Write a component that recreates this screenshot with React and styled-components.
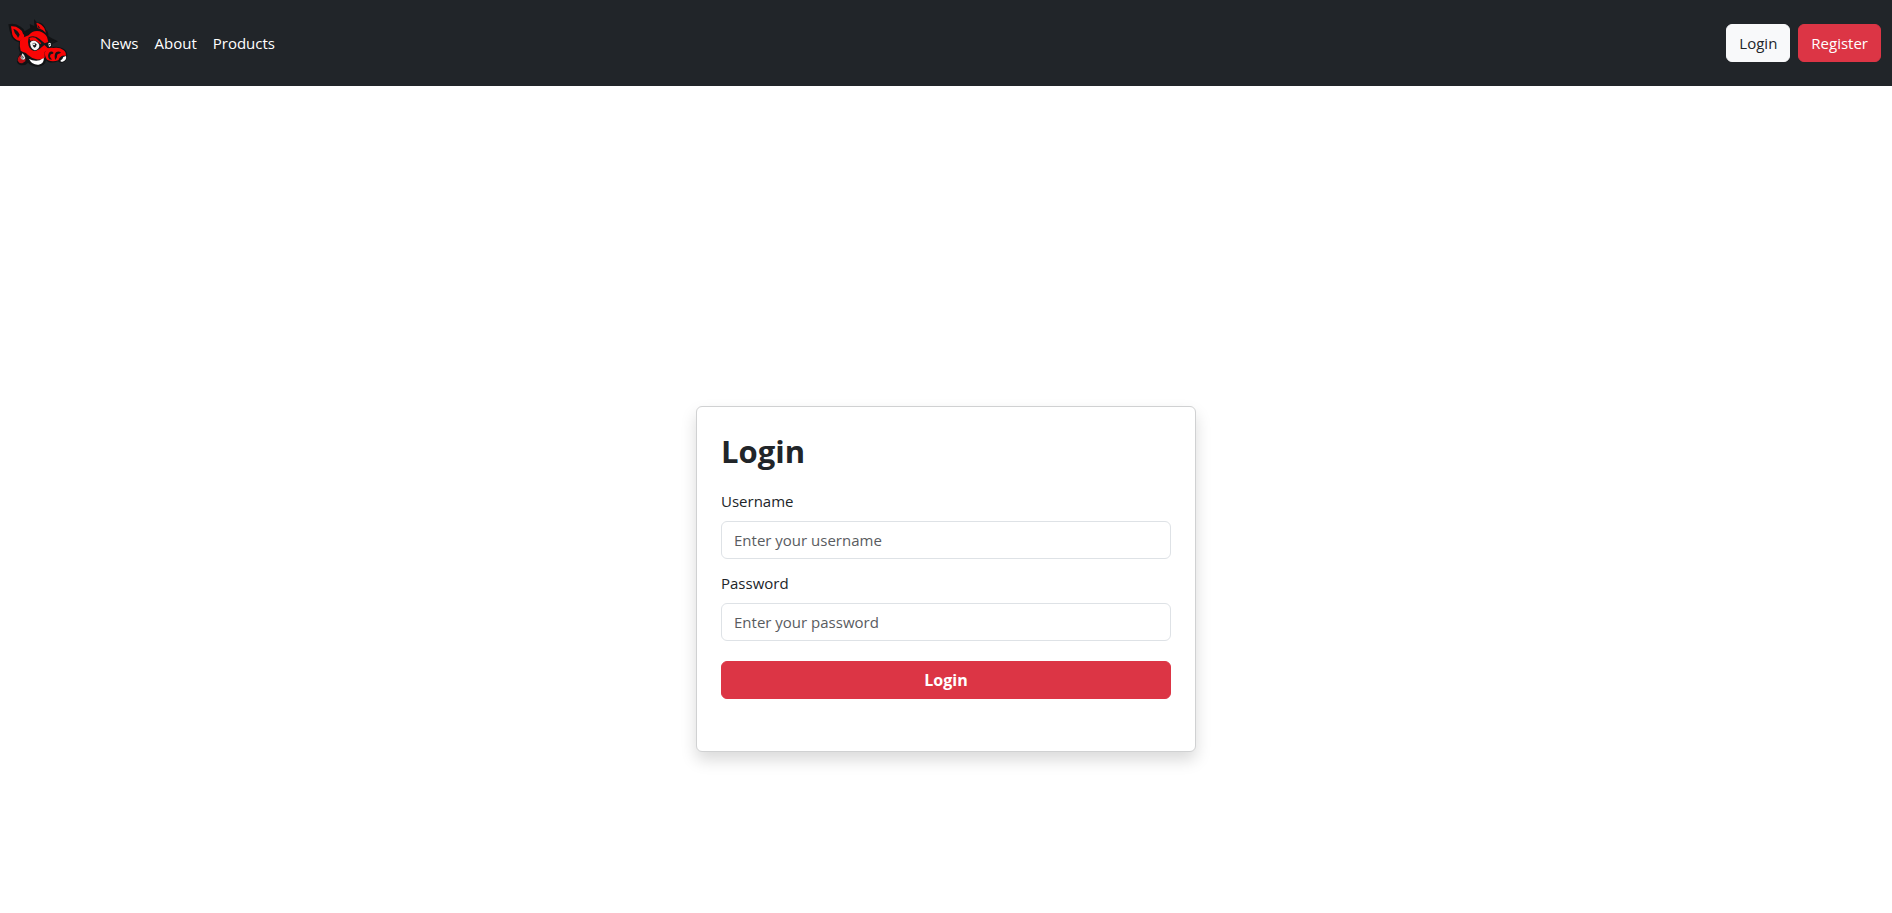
import React, { useState } from 'react';
import styled, { createGlobalStyle } from 'styled-components';

const GlobalStyle = createGlobalStyle`
  *,
  *::before,
  *::after {
    box-sizing: border-box;
  }

  body {
    margin: 0;
    background: #fff;
    color: #212529;
    font-family: 'Segoe UI', 'Open Sans', 'Noto Sans', sans-serif;
    font-size: 15px;
    line-height: 24px;
  }
`;

const Page = styled.div`
  display: flex;
  flex-direction: column;
  min-height: 100vh;
`;

const Navbar = styled.header`
  display: flex;
  align-items: center;
  padding: 13px 11px 13px 8px;
  background: #212529;
`;

const Brand = styled.a`
  display: flex;
  margin-right: 32px;
`;

const Logo = styled.svg`
  width: 60px;
  height: 60px;
`;

const NavLinks = styled.nav`
  display: flex;
  flex: 1;
  gap: 16px;
`;

const NavLink = styled.a`
  color: #fff;
  text-decoration: none;
`;

const Actions = styled.div`
  display: flex;
  gap: 8px;
`;

const Button = styled.button`
  padding: 6px 12px;
  border: 1px solid ${({ $light }) => ($light ? '#f8f9fa' : '#dc3545')};
  border-radius: 6px;
  background: ${({ $light }) => ($light ? '#f8f9fa' : '#dc3545')};
  color: ${({ $light }) => ($light ? '#212529' : '#fff')};
  font: inherit;
  cursor: pointer;
`;

const SubmitButton = styled(Button)`
  width: 100%;
  margin: 8px 0 28px;
  font-size: 16px;
  font-weight: 700;
`;

const Main = styled.main`
  display: flex;
  flex: 1;
  align-items: center;
  justify-content: center;
  padding-top: 159px;
`;

const Card = styled.form`
  width: 100%;
  max-width: 500px;
  padding: 24px;
  border: 1px solid #d0d1d2;
  border-radius: 6px;
  background: #fff;
  box-shadow: 0 8px 16px rgba(0, 0, 0, 0.15);
`;

const Title = styled.h1`
  margin: 0 0 18px;
  font-size: 31px;
  font-weight: 700;
  line-height: 40px;
`;

const Field = styled.div`
  margin-bottom: 12px;
`;

const Label = styled.label`
  display: block;
  margin-bottom: 8px;
`;

const Input = styled.input`
  display: block;
  width: 100%;
  height: 38px;
  padding: 6px 12px;
  border: 1px solid #dee2e6;
  border-radius: 6px;
  background: #fff;
  color: #212529;
  font: inherit;

  &::placeholder {
    color: #595c5f;
    opacity: 1;
  }
`;

const BoarLogo = () => (
  <Logo viewBox="24 39 180 180" aria-hidden="true">
    <path
      fill="#111315"
      d="M25 73 Q45 68 62 80 Q72 86 74 94 L91 84 L89 72 L103 78 L102 57 L112 68 Q127 66 135 82 L138 90 Q146 93 145 108 L154 114 L174 124 L157 132 L156 141 Q176 138 188 145 Q201 151 202 166 Q202 185 185 189 Q177 188 174 184 Q160 190 145 186 L138 181 Q136 198 113 200 Q94 199 84 188 Q75 199 60 195 Q47 189 52 176 L60 158 L56 146 L57 127 Q43 124 35 111 Q28 96 25 73Z"
    />
    {/* ears */}
    <path
      fill="#f80505"
      d="M33 79 Q48 78 58 86 Q68 92 69 101 Q76 106 70 116 L60 123 Q42 119 37 104Z M109 68 Q126 72 133 85 L138 99 L128 90 L113 84Z"
    />
    <path
      fill="#151719"
      d="M40 86 Q54 90 59 104 L54 114 L51 107 Q43 100 40 86Z M112 73 L122 86 L115 83Z"
    />
    {/* face, brow and cheek */}
    <path
      fill="#f80505"
      d="M60 122 Q70 110 86 106 Q98 90 119 94 Q134 99 141 111 L146 130 L142 143 L150 146 L134 156 L134 173 Q120 181 109 178 Q96 176 84 165 Q77 156 70 157 L62 152 Q58 138 60 122Z"
    />
    <path
      fill="#f80505"
      d="M134 158 Q143 141 160 144 Q178 141 190 150 Q200 158 197 168 Q188 164 179 173 L175 181 Q158 187 145 181 Q136 177 134 158Z"
    />
    {/* brow line */}
    <path
      fill="#151719"
      d="M86 112 Q104 104 119 117 L134 130 L150 124 L168 123 L156 131 L155 141 L143 144 L133 135 Q120 148 107 153 Q91 153 86 138 Q82 126 86 112Z"
    />
    <path fill="#f80505" d="M88 114 Q103 108 113 119 L124 130 L121 133 Q110 118 91 122Z" />
    {/* nostrils */}
    <path
      fill="#151719"
      d="M147 158 Q155 151 161 159 L157 162 Q150 160 150 170 L156 179 L148 178 Q141 168 147 158Z M168 157 Q176 151 183 158 L177 161 Q170 162 171 172 L166 180 Q161 166 168 157Z"
    />
    {/* eyes */}
    <path
      fill="#f4f4f4"
      d="M90 129 Q94 120 106 123 Q119 130 118 139 Q115 150 104 151 Q92 147 90 129Z M145 130 Q154 125 153 137 L147 141Z"
    />
    <path
      fill="#17191b"
      d="M98 130 Q105 125 109 133 Q110 142 103 143 Q97 140 98 130Z"
    />
    <circle cx="102" cy="133" r="3" fill="#fff" />
    <circle cx="149" cy="134" r="2" fill="#17191b" />
    {/* tusks */}
    <path
      fill="#fff"
      d="M87 177 Q101 184 119 181 L131 174 Q134 190 116 194 Q97 196 87 177Z M181 182 Q188 179 190 171 L198 168 Q201 181 188 185 Q183 187 181 182Z"
    />
    {/* earring */}
    <path
      fill="#b80d12"
      d="M61 164 Q52 173 53 182 Q58 191 67 190 L76 184 L77 177 L66 179Z"
    />
    <path fill="#e5e5e5" d="M67 160 Q73 163 76 174 Q74 182 65 178 Q59 174 64 168Z" />
    <path fill="none" stroke="#333" strokeWidth="2" d="M66 167 L71 173 L65 175Z" />
  </Logo>
);

const App = () => {
  const [username, setUsername] = useState('');
  const [password, setPassword] = useState('');

  const handleSubmit = e => {
    e.preventDefault();
  };

  return (
    <Page>
      <GlobalStyle />
      <Navbar>
        <Brand href="#home" aria-label="Home">
          <BoarLogo />
        </Brand>
        <NavLinks>
          <NavLink href="#news">News</NavLink>
          <NavLink href="#about">About</NavLink>
          <NavLink href="#products">Products</NavLink>
        </NavLinks>
        <Actions>
          <Button type="button" $light>
            Login
          </Button>
          <Button type="button">Register</Button>
        </Actions>
      </Navbar>

      <Main>
        <Card onSubmit={handleSubmit}>
          <Title>Login</Title>
          <Field>
            <Label htmlFor="username">Username</Label>
            <Input
              id="username"
              type="text"
              placeholder="Enter your username"
              value={username}
              onChange={e => setUsername(e.target.value)}
            />
          </Field>
          <Field>
            <Label htmlFor="password">Password</Label>
            <Input
              id="password"
              type="password"
              placeholder="Enter your password"
              value={password}
              onChange={e => setPassword(e.target.value)}
            />
          </Field>
          <SubmitButton type="submit">Login</SubmitButton>
        </Card>
      </Main>
    </Page>
  );
};

export default App;
